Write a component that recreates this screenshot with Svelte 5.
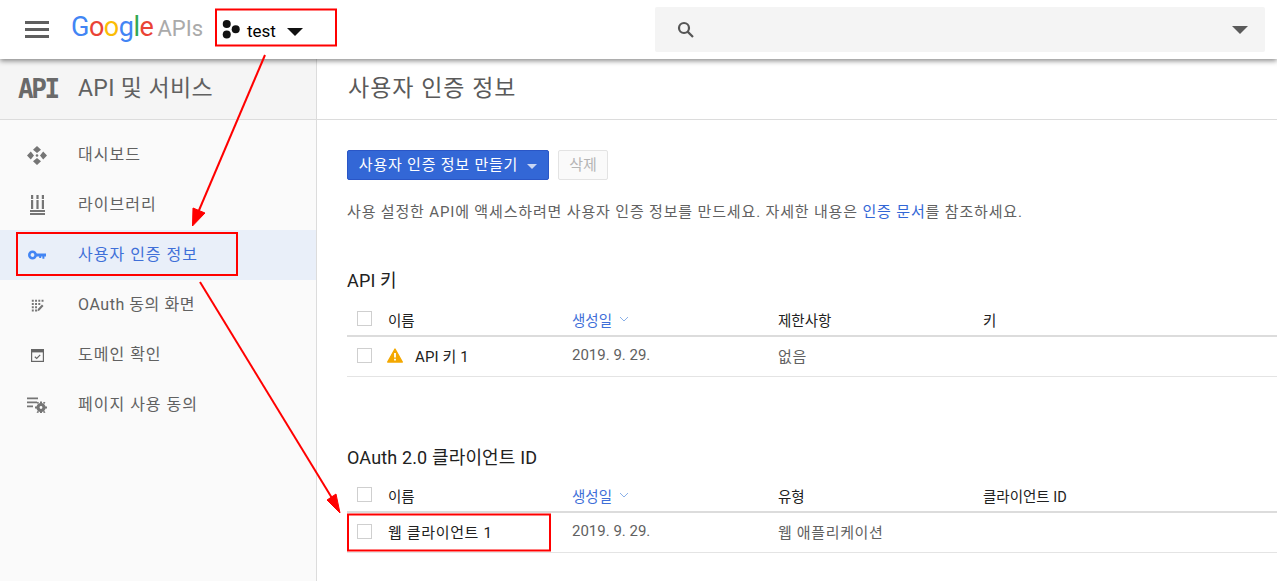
<script>
  const navItems = [
    { label: '대시보드', icon: 'dash' },
    { label: '라이브러리', icon: 'lib' },
    { label: '사용자 인증 정보', icon: 'key', active: true },
    { label: 'OAuth 동의 화면', icon: 'oauth', tight: true },
    { label: '도메인 확인', icon: 'domain' },
    { label: '페이지 사용 동의', icon: 'page' }
  ];
</script>

<div class="page">
  <header class="topbar">
    <button class="menu" aria-label="menu"><span></span><span></span><span></span></button>
    <div class="logo">
      <span class="blue">G</span><span class="red">o</span><span class="yellow">o</span><span class="blue">g</span><span class="green">l</span><span class="red">e</span>
      <span class="apis">APIs</span>
    </div>
    <div class="project">
      <svg width="19" height="19" viewBox="0 0 18 18"><circle cx="4.5" cy="3.8" r="3.8" /><circle cx="4.5" cy="13.8" r="3.8" /><circle cx="13" cy="8.8" r="3.8" /></svg>
      <span class="project-name">test</span>
      <span class="caret"></span>
    </div>
    <div class="search">
      <svg width="20" height="20" viewBox="0 0 20 20" fill="none" stroke="#555" stroke-width="2.2"><circle cx="8" cy="8" r="5" /><path d="M11.6 11.6 L17 17" /></svg>
      <span class="search-caret"></span>
    </div>
  </header>

  <div class="body">
    <aside class="sidebar">
      <div class="side-head">
        <span class="api-badge">API</span>
        <span class="side-title">API 및 서비스</span>
      </div>
      <nav>
        {#each navItems as item}
          <div class="nav-item" class:active={item.active}>
            <span class="nav-icon">
              {#if item.icon === 'dash'}
                <svg width="20" height="19" viewBox="0 0 20 19" fill="#757575"><path d="M10 0 L14 3.800 L10 7 L6 3.800Z M10 12 L14 15.200 L10 19 L6 15.200Z M3.800 5.500 L7 9.500 L3.800 13.500 L0 9.500Z M16.200 5.500 L20 9.500 L16.200 13.500 L13 9.500Z" /><circle cx="10" cy="9.500" r="1.300" /></svg>
              {:else if item.icon === 'lib'}
                <svg width="15" height="20" viewBox="0 0 15 20" fill="#757575"><path d="M1 0h2.200v4H1z M6.400 0h2.200v4H6.400z M11.800 0h2.200v4h-2.200z M1 5h2.200v9H1z M6.400 5h2.200v9H6.400z M11.800 5h2.200v9h-2.200z M0 15h15v2H0z M0 18h15v2H0z" /></svg>
              {:else if item.icon === 'key'}
                <svg width="18" height="10" viewBox="0 0 18 10" fill="none"><circle cx="4.500" cy="5" r="3.200" stroke="#4285f4" stroke-width="2.600" /><path d="M8 3.600h10v2.800h-1.600v2.400h-2v-2.400h-1.200v1.600h-2v-1.600H8z" fill="#4285f4" /></svg>
              {:else if item.icon === 'oauth'}
                <svg width="13" height="13" viewBox="0 0 16 16" fill="#757575"><path d="M1 1h2.400v2.400H1z M5 1h2.400v2.400H5z M9 1h2.400v2.400H9z M13 1h2.400v2.400H13z M1 5h2.400v2.400H1z M5 5h2.400v2.400H5z M9 5h2.400v2.400H9z M1 9h2.400v2.400H1z M5 9h2.400v2.400H5z M1 13h2.400v2.400H1z M5 13h2.400v2.400H5z M8 15 L8.400 12.200 L13.500 6.800 L15.400 8.700 L10.300 14.200Z" /></svg>
              {:else if item.icon === 'domain'}
                <svg width="13" height="13" viewBox="0 0 13 13" fill="none" stroke="#666" stroke-width="1.200"><rect x="0.600" y="0.600" width="11.800" height="11.800" /><path d="M0.600 2h11.800" stroke-width="2.800" /><path d="M3.800 7.800 L5.700 9.500 L9.200 5.800" /></svg>
              {:else}
                <svg width="20" height="16" viewBox="0 0 20 16" fill="#757575"><path d="M0 0.500h11v1.800H0z M0 4.500h10v1.800H0z M0 8.500h6v1.800H0z" /><circle cx="14" cy="10.500" r="3" fill="none" stroke="#757575" stroke-width="3.200" /><path d="M13 4.500h2v2h-2z M13 14h2v2h-2z M8 9.500h2v2H8z M18 9.500h2v2h-2z M9.500 5.500l1.500-.8 1 1-1 1.500z M18.500 5.500l-1.500-.8-1 1 1 1.500z M9.500 15.500l1.500.5 1-1-1-1.500z M18.500 15.500l-1.500.5-1-1 1-1.500z" /></svg>
              {/if}
            </span>
            <span class="nav-label" class:tight={item.tight}>{item.label}</span>
          </div>
        {/each}
      </nav>
    </aside>

    <main class="content">
      <div class="page-head"><h1>사용자 인증 정보</h1></div>
      <div class="inner">
        <div class="actions">
          <button class="primary"><span class="btn-label">사용자 인증 정보 만들기</span><span class="btn-caret"></span></button>
          <button class="disabled"><span class="btn-label">삭제</span></button>
        </div>
        <p class="intro">사용 설정한 API에 액세스하려면 사용자 인증 정보를 만드세요. 자세한 내용은 <span class="link">인증 문서</span>를 참조하세요.</p>

        <h2 class="first">API 키</h2>
        <div class="table">
          <div class="row head">
            <span class="box"></span>
            <span class="name">이름</span>
            <span class="sort">생성일
              <svg width="10" height="6" viewBox="0 0 10 6" fill="none" stroke="#8ab0e8" stroke-width="1"><path d="M1 1 L5 5 L9 1" /></svg>
            </span>
            <span>제한사항</span>
            <span>키</span>
          </div>
          <div class="row item">
            <span class="box"></span>
            <span class="name warn">
              <svg width="16" height="15" viewBox="0 0 16 15"><path d="M8 1 L15.300 14 H0.700Z" fill="#f4a800" stroke="#f4a800" stroke-width="1.400" stroke-linejoin="round" /><path d="M7.100 5h1.800v4.600H7.100z M7.100 10.800h1.800v1.800H7.100z" fill="#fff" /></svg>
              API 키 1
            </span>
            <span class="date">2019. 9. 29.</span>
            <span>없음</span>
            <span></span>
          </div>
        </div>

        <h2 class="second">OAuth 2.0 클라이언트 ID</h2>
        <div class="table">
          <div class="row head">
            <span class="box"></span>
            <span class="name">이름</span>
            <span class="sort">생성일
              <svg width="10" height="6" viewBox="0 0 10 6" fill="none" stroke="#8ab0e8" stroke-width="1"><path d="M1 1 L5 5 L9 1" /></svg>
            </span>
            <span>유형</span>
            <span>클라이언트 ID</span>
          </div>
          <div class="row item">
            <span class="box"></span>
            <span class="name">웹 클라이언트 1</span>
            <span class="date">2019. 9. 29.</span>
            <span>웹 애플리케이션</span>
            <span></span>
          </div>
        </div>
      </div>
    </main>
  </div>

  <!-- red annotations drawn over the screenshot -->
  <svg class="marks" width="1277" height="581" viewBox="0 0 1277 581" fill="none" stroke="#f00" stroke-width="2">
    <rect x="216" y="9.500" width="120" height="36" />
    <rect x="17" y="233" width="220" height="42" />
    <rect x="348" y="514.500" width="202" height="36" />
    <path d="M265 55 L197 215" />
    <path d="M200 282 L335 503" />
    <path d="M192.500 226 L193 208 L205 213Z" fill="#f00" stroke-width="1" />
    <path d="M340 513 L327 500 L336 494Z" fill="#f00" stroke-width="1" />
  </svg>
</div>

<style>
  :global(body) {
    margin: 0;
    background: #fff;
    overflow: hidden;
  }

  .page {
    position: relative;
    width: 1277px;
    height: 581px;
    overflow: hidden;
    font-family: Roboto, "Noto Sans CJK KR", sans-serif;
    font-size: 14px;
    color: #616161;
  }

  .topbar {
    position: relative;
    z-index: 2;
    height: 59px;
    display: flex;
    align-items: center;
    background: #fff;
    box-shadow: 0 2px 5px rgba(0, 0, 0, 0.45);
  }

  .menu {
    width: 24px;
    margin: 0 0 0 25px;
    padding: 0;
    border: 0;
    background: none;
    display: flex;
    flex-direction: column;
    gap: 4px;
  }

  .menu span {
    height: 3px;
    background: #5f5f5f;
  }

  .logo {
    margin-left: 22px;
    width: 144px;
    font-size: 27px;
    line-height: 30px;
    letter-spacing: -0.5px;
    margin-top: -4px;
    white-space: nowrap;
  }

  .blue { color: #4285f4; }
  .red { color: #ea4335; }
  .yellow { color: #fbbc05; }
  .green { color: #34a853; }

  .apis {
    color: #aaa;
    font-size: 22px;
    letter-spacing: 0;
    margin-left: -2px;
  }

  .project {
    width: 118px;
    margin-left: -1px;
    padding-left: 8px;
    display: flex;
    align-items: center;
    color: #000;
    font-size: 17px;
  }

  .project svg {
    fill: #111;
  }

  .project-name {
    margin-left: 6px;
    margin-top: 2px;
  }

  .caret {
    margin-left: 11px;
    margin-top: 4px;
    border-left: 8px solid transparent;
    border-right: 8px solid transparent;
    border-top: 8px solid #111;
  }

  .search {
    margin-left: 315px;
    width: 610px;
    height: 45px;
    padding: 0 17px 0 21px;
    box-sizing: border-box;
    background: #f4f4f4;
    border-radius: 2px;
    display: flex;
    align-items: center;
    justify-content: space-between;
  }

  .search-caret {
    border-left: 8px solid transparent;
    border-right: 8px solid transparent;
    border-top: 8px solid #5a5a5a;
  }

  .body {
    display: flex;
    height: 522px;
  }

  .sidebar {
    width: 316px;
    flex: none;
    background: #fafafa;
    border-right: 1px solid #dcdcdc;
  }

  .side-head {
    height: 60px;
    display: flex;
    align-items: center;
    border-bottom: 1px solid #dcdcdc;
    background: #f5f5f5;
  }

  .api-badge {
    width: 78px;
    padding-left: 18px;
    box-sizing: border-box;
    font-family: "DejaVu Sans Mono", monospace;
    font-weight: 700;
    font-size: 26px;
    letter-spacing: -2.400px;
    color: #6a6a6a;
  }

  .side-title {
    font-size: 23px;
    color: #616161;
    letter-spacing: 0.35px;
    margin-bottom: 7px;
  }

  nav {
    padding-top: 10px;
  }

  .nav-item {
    height: 50px;
    display: flex;
    align-items: center;
    font-size: 16px;
    color: #616161;
  }

  .nav-item.active {
    background: #e9eff9;
    color: #3f6fd8;
  }

  .nav-icon {
    width: 78px;
    padding-left: 27px;
    padding-right: 31px;
    box-sizing: border-box;
    flex: none;
    display: flex;
    align-items: center;
    justify-content: center;
  }

  .nav-label {
    letter-spacing: 1px;
    margin-bottom: 4px;
  }

  .nav-label.tight {
    letter-spacing: 0.55px;
  }

  .content {
    flex: 1;
    min-width: 0;
  }

  .page-head {
    height: 60px;
    display: flex;
    align-items: center;
    border-bottom: 1px solid #dcdcdc;
    padding-left: 30px;
  }

  h1 {
    margin: 0 0 6px 1px;
    font-size: 23px;
    font-weight: 400;
    color: #5a5a5a;
    letter-spacing: 1px;
  }

  .inner {
    padding: 30px 0 0 30px;
  }

  .actions {
    display: flex;
    gap: 9px;
  }

  button.primary,
  button.disabled {
    height: 30px;
    font-family: inherit;
    border-radius: 2px;
    font-size: 15px;
    padding: 0;
    display: flex;
    align-items: center;
    justify-content: center;
  }

  .btn-label {
    margin-bottom: 3px;
  }

  button.primary {
    width: 202px;
    background: #3367d6;
    border: 1px solid #2a56c6;
    color: #fff;
    letter-spacing: 0.78px;
    gap: 9px;
  }

  .btn-caret {
    margin-top: 2px;
    border-left: 5px solid transparent;
    border-right: 5px solid transparent;
    border-top: 5px solid #c9d6f3;
  }

  button.disabled {
    width: 50px;
    background: #fafafa;
    border: 1px solid #e3e3e3;
    color: #b5b5b5;
  }

  .intro {
    margin: 22px 0 0;
    line-height: 20px;
    font-size: 15px;
    color: #616161;
    letter-spacing: 0.84px;
  }

  .link {
    color: #3367d6;
  }

  h2 {
    margin: 0;
    font-size: 18px;
    line-height: 24px;
    font-weight: 400;
    color: #212121;
    letter-spacing: 0.15px;
  }

  h2.first {
    margin-top: 47px;
  }

  h2.second {
    margin-top: 69px;
    margin-bottom: -1px;
  }

  .table {
    margin-top: 12px;
    font-size: 14.500px;
  }

  .row {
    display: grid;
    grid-template-columns: 41px 184px 206px 205px 1fr;
    align-items: center;
    box-sizing: border-box;
    white-space: nowrap;
  }

  .row.head {
    height: 32px;
    color: #212121;
    border-bottom: 2px solid #dcdcdc;
    padding-bottom: 2px;
  }

  .row.head .box {
    margin-top: -1px;
  }

  .row.item {
    height: 40px;
    border-bottom: 1px solid #e4e4e4;
    color: #616161;
    font-size: 15px;
    letter-spacing: 0.65px;
    padding-bottom: 3px;
  }

  .box {
    width: 15px;
    height: 15px;
    margin-left: 10px;
    border: 1px solid #cfcfcf;
    background: #fff;
    box-sizing: border-box;
  }

  .name {
    color: #212121;
  }

  .warn {
    display: flex;
    align-items: center;
    gap: 12px;
    margin-left: -1px;
    letter-spacing: 0.1px;
  }

  .sort {
    color: #3f6fd8;
    display: flex;
    align-items: center;
    gap: 7px;
  }

  .date {
    color: #616161;
    letter-spacing: 0;
  }

  .marks {
    position: absolute;
    left: 0;
    top: 0;
    z-index: 5;
    pointer-events: none;
  }
</style>
